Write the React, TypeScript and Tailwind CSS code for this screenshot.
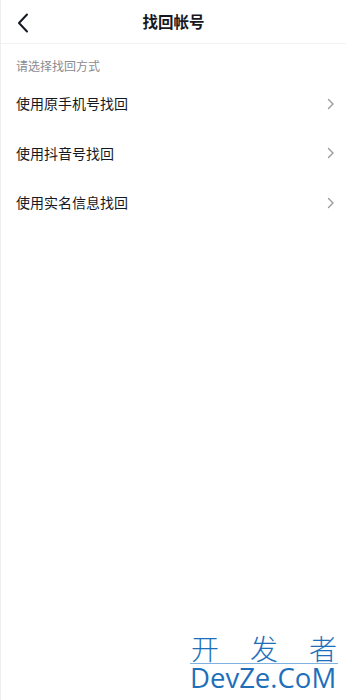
export default function App() {
  const options = ['使用原手机号找回', '使用抖音号找回', '使用实名信息找回'];

  return (
    <div
      className="relative h-[700px] w-[346px] overflow-hidden border-l border-[#eeeeee] bg-white"
      style={{ fontFamily: '"Noto Sans CJK SC", "Noto Sans", sans-serif' }}
    >
      {/* Header */}
      <div className="relative flex h-[44px] items-center justify-center border-b border-[#f2f2f2]">
        <button className="absolute left-[14px] top-[12px] flex h-[22px] w-[16px] items-center justify-center">
          <svg width="12" height="20" viewBox="0 0 12 20" fill="none">
            <path d="M10 1.5L2 10l8 8.5" stroke="#161823" strokeWidth="2" strokeLinecap="round" strokeLinejoin="round" />
          </svg>
        </button>
        <h1 className="text-[15.5px] font-bold text-[#161823]">找回帐号</h1>
      </div>

      {/* Subtitle */}
      <p className="h-[35px] pl-[15px] pt-[15px] text-[12px] leading-[14px] text-[#8a8b91]">请选择找回方式</p>

      {/* Options */}
      <ul>
        {options.map((label) => (
          <li key={label} className="flex h-[49.5px] items-center justify-between pl-[15px] pr-[11px]">
            <span className="text-[14px] text-[#161823]">{label}</span>
            <svg width="8" height="12" viewBox="0 0 8 12" fill="none">
              <path d="M1.5 1.5L6 6l-4.5 4.5" stroke="#9a9a9e" strokeWidth="1.4" strokeLinecap="round" strokeLinejoin="round" />
            </svg>
          </li>
        ))}
      </ul>

      {/* Watermark */}
      <div className="absolute left-[189px] top-[634px] w-[148px] text-[#1e6fba]">
        <div className="flex justify-between px-[1px] text-[28px] font-light leading-[29px]">
          <span>开</span>
          <span>发</span>
          <span>者</span>
        </div>
        <div className="h-px w-full bg-[#7fb2e0]" />
        <div className="text-[27.5px] leading-[28px]" style={{ fontFamily: '"Open Sans", "Noto Sans", sans-serif' }}>
          DevZe.CoM
        </div>
      </div>
    </div>
  );
}
